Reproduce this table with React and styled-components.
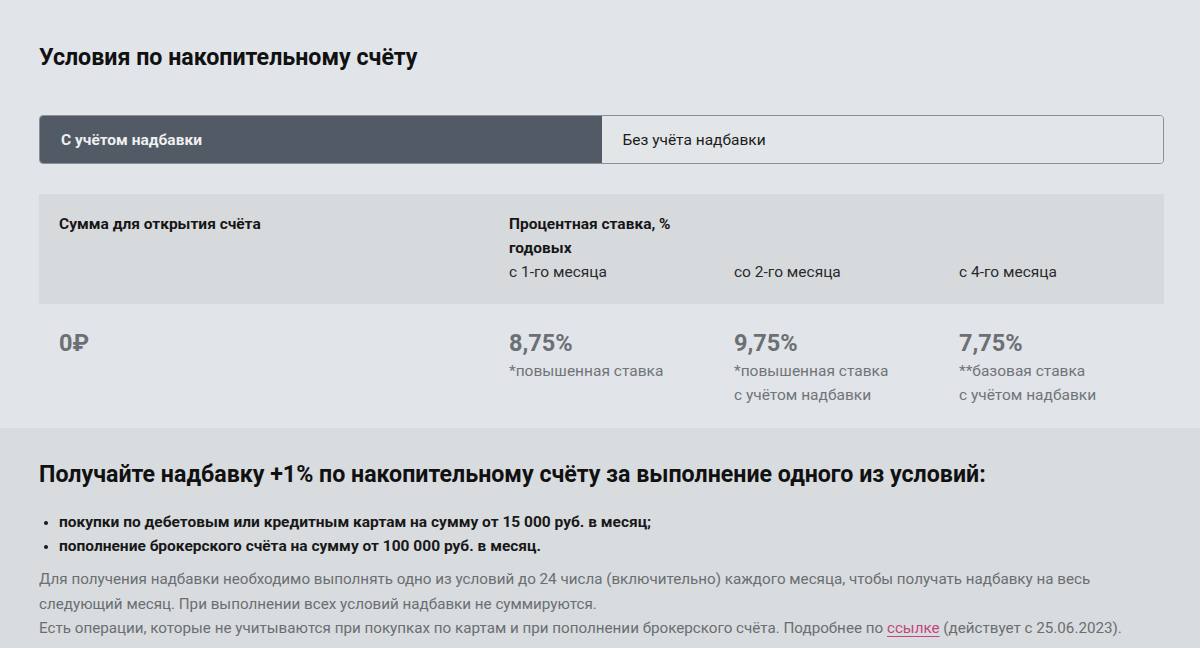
import React from "react";
import styled, { createGlobalStyle } from "styled-components";

const Global = createGlobalStyle`
  html, body { margin: 0; padding: 0; }
  body {
    font-family: Roboto, "Noto Sans", "Liberation Sans", sans-serif;
    background: #e1e4e8;
    width: 1200px;
    height: 648px;
    overflow: hidden;
  }
`;

const Page = styled.div`
  width: 1200px;
  height: 648px;
  display: flex;
  flex-direction: column;
`;

const Top = styled.section`
  background: #e1e4e8;
  padding: 42px 36px 0 39px;
`;

const Title = styled.h2`
  margin: 0;
  font-size: 23.2px;
  line-height: 30px;
  font-weight: 700;
  color: #111;
`;

const Tabs = styled.div`
  margin-top: 43px;
  display: grid;
  grid-template-columns: 1fr 1fr;
  height: 49px;
  border: 1px solid #8b9096;
  border-radius: 4px;
  overflow: hidden;
  box-sizing: border-box;
`;

const Tab = styled.div`
  display: flex;
  align-items: center;
  padding-left: 21px;
  font-size: 15.5px;
  background: ${(p) => (p.$active ? "#525b65" : "#e3e6e9")};
  color: ${(p) => (p.$active ? "#eef0f2" : "#1c1c1c")};
  font-weight: ${(p) => (p.$active ? 700 : 400)};
`;

const Table = styled.div`
  margin-top: 30px;
`;

const HeadRow = styled.div`
  background: #d6dadd;
  display: grid;
  grid-template-columns: 40% 20% 20% 20%;
  padding: 18px 0 20px;
`;

const Cell = styled.div`
  padding: 0 20px;
  font-size: 15.5px;
  line-height: 24px;
  color: #1a1a1a;
`;

const HeadLabel = styled.div`
  font-weight: 700;
  color: #161616;
`;

const SubLabel = styled.div`
  font-weight: 400;
  color: #2a2a2a;
`;

const BodyRow = styled.div`
  display: grid;
  grid-template-columns: 40% 20% 20% 20%;
  padding: 23px 0 21px;
`;

const Value = styled.div`
  font-size: 23.5px;
  line-height: 32px;
  font-weight: 700;
  color: #6c7074;
`;

const Note = styled.div`
  font-size: 15.5px;
  line-height: 24px;
  color: #707478;
`;

const Bottom = styled.section`
  flex: 1;
  background: #d8dcdf;
  padding: 30px 39px 0;
`;

const Heading = styled.h3`
  margin: 0;
  font-size: 23.2px;
  line-height: 32px;
  font-weight: 700;
  color: #111;
`;

const List = styled.ul`
  margin: 20px 0 0;
  padding: 0 0 0 20px;
  list-style: disc;
`;

const Item = styled.li`
  font-size: 15.5px;
  line-height: 24px;
  font-weight: 700;
  color: #181818;
  &::marker { font-size: 14px; }
`;

const Para = styled.p`
  margin: 9px 0 0;
  font-size: 15.2px;
  line-height: 24.5px;
  color: #6a6e72;
`;

const Link = styled.a`
  color: #c2477f;
  text-decoration: underline;
  text-underline-offset: 3px;
`;

export default function App() {
  return (
    <Page>
      <Global />
      <Top>
        <Title>Условия по накопительному счёту</Title>
        <Tabs>
          <Tab $active>С учётом надбавки</Tab>
          <Tab>Без учёта надбавки</Tab>
        </Tabs>
        <Table>
          <HeadRow>
            <Cell>
              <HeadLabel>Сумма для открытия счёта</HeadLabel>
            </Cell>
            <Cell>
              <HeadLabel>Процентная ставка, % годовых</HeadLabel>
            </Cell>
            <Cell />
            <Cell />
            <Cell />
            <Cell>
              <SubLabel>с 1-го месяца</SubLabel>
            </Cell>
            <Cell>
              <SubLabel>со 2-го месяца</SubLabel>
            </Cell>
            <Cell>
              <SubLabel>с 4-го месяца</SubLabel>
            </Cell>
          </HeadRow>
          <BodyRow>
            <Cell>
              <Value>0₽</Value>
            </Cell>
            <Cell>
              <Value>8,75%</Value>
              <Note>*повышенная ставка</Note>
            </Cell>
            <Cell>
              <Value>9,75%</Value>
              <Note>
                *повышенная ставка
                <br />с учётом надбавки
              </Note>
            </Cell>
            <Cell>
              <Value>7,75%</Value>
              <Note>
                **базовая ставка
                <br />с учётом надбавки
              </Note>
            </Cell>
          </BodyRow>
        </Table>
      </Top>
      <Bottom>
        <Heading>
          Получайте надбавку +1% по накопительному счёту за выполнение одного из условий:
        </Heading>
        <List>
          <Item>покупки по дебетовым или кредитным картам на сумму от 15 000 руб. в месяц;</Item>
          <Item>пополнение брокерского счёта на сумму от 100 000 руб. в месяц.</Item>
        </List>
        <Para>
          Для получения надбавки необходимо выполнять одно из условий до 24 числа (включительно) каждого месяца, чтобы получать надбавку на весь следующий месяц. При выполнении всех условий надбавки не суммируются.
          <br />
          Есть операции, которые не учитываются при покупках по картам и при пополнении брокерского счёта. Подробнее по <Link>ссылке</Link> (действует с 25.06.2023).
        </Para>
      </Bottom>
    </Page>
  );
}
